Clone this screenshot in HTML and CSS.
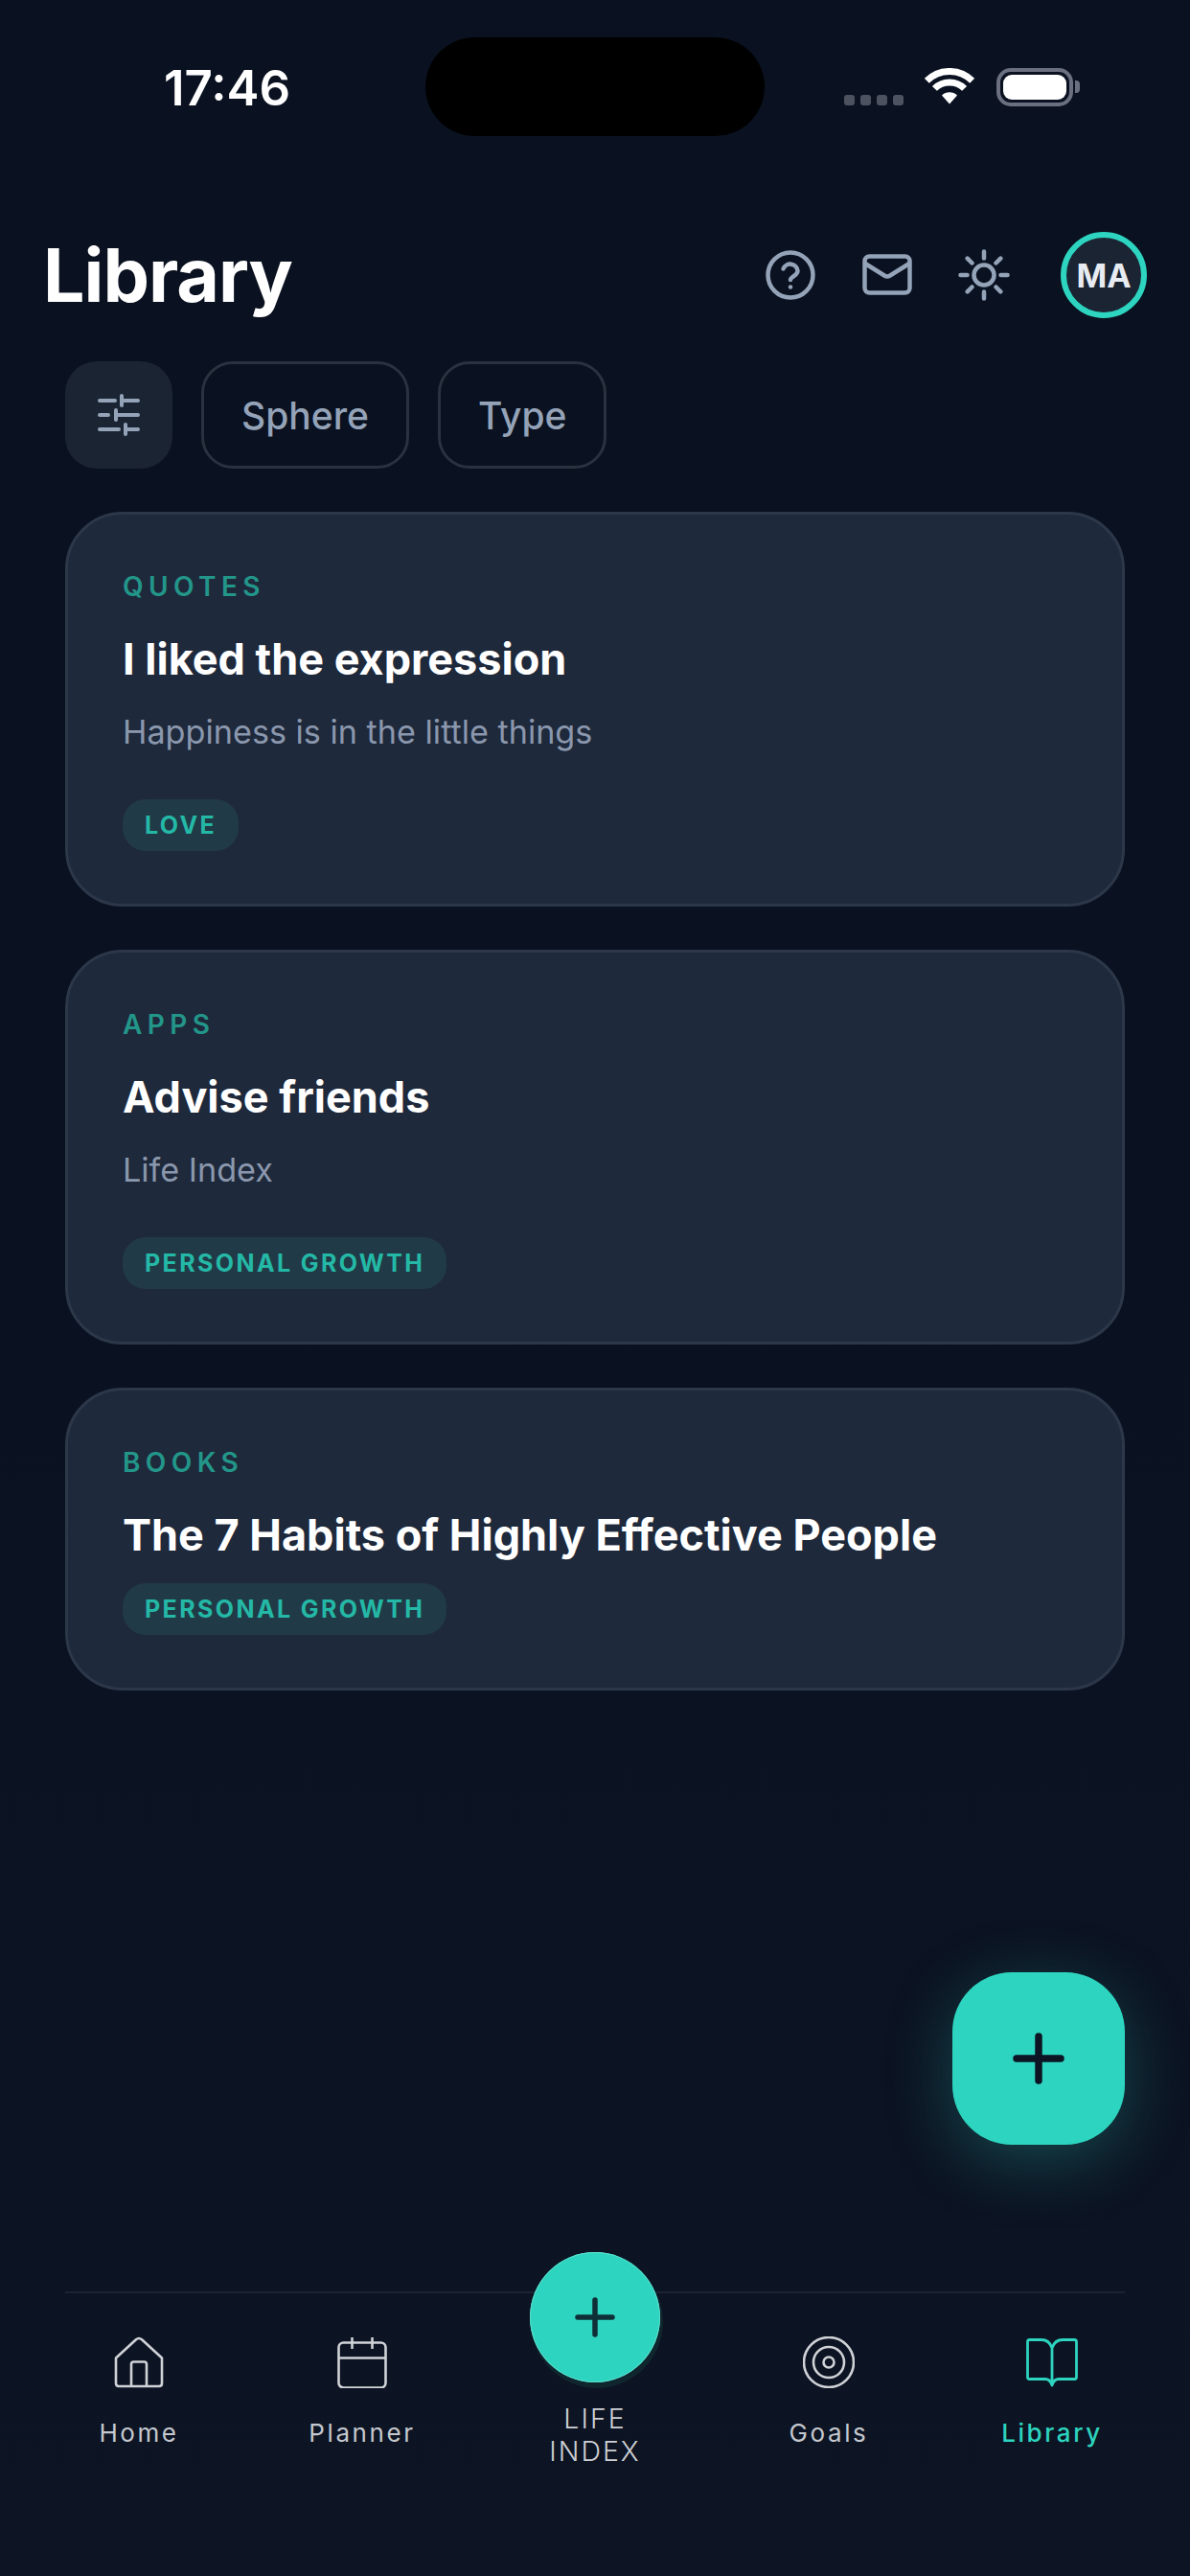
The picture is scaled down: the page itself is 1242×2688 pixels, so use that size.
FILE: index.html
```html
<!DOCTYPE html>
<html lang="en">
<head>
<meta charset="utf-8">
<title>Library</title>
<link rel="stylesheet" href="styles.css">
</head>
<body>
<div class="page">
  <div class="island"></div>
  <div class="status">
    <span class="time">17:46</span>
    <div class="status-icons">
      <div class="dots"><i></i><i></i><i></i><i></i></div>
      <svg class="wifi" width="54" height="38" viewBox="0 0 54 38"><g fill="none" stroke="#fff" stroke-width="7"><path d="M3.3 13.3a33.5 33.5 0 0 1 47.4 0"/><path d="M11.4 21.4a22 22 0 0 1 31.2 0"/></g><path d="M19 28.5a11.5 11.5 0 0 1 16 0L27 37.5z" fill="#fff"/></svg>
      <div class="battery"><div class="battery-fill"></div></div>
      <div class="battery-nub"></div>
    </div>
  </div>
  <header class="header">
    <h1 class="title">Library</h1>
    <div class="actions">
      <svg class="act" width="54" height="54" viewBox="0 0 54 54" fill="none" stroke="#94a3b8" stroke-width="4.5" stroke-linecap="round" stroke-linejoin="round"><circle cx="27" cy="27" r="23.5"/><path d="M19.5 20.5a7.8 7.8 0 0 1 15 2.2c0 5-7.5 6-7.5 9.3"/><path d="M27 39.5h.02"/></svg>
      <svg class="act" width="54" height="54" viewBox="0 0 54 54" fill="none" stroke="#94a3b8" stroke-width="4.5" stroke-linecap="round" stroke-linejoin="round"><rect x="3.5" y="7.5" width="47" height="38" rx="5"/><path d="M4 15l20 12.5q3 1.8 6 0L50 15"/></svg>
      <svg class="act" width="54" height="54" viewBox="0 0 54 54" fill="none" stroke="#94a3b8" stroke-width="4.5" stroke-linecap="round" stroke-linejoin="round"><circle cx="27" cy="27" r="10.5"/><path d="M27 2.500v7M27 44.500v7M2.500 27h7M44.500 27h7M9.700 9.700l4.800 4.800M39.500 39.500l4.800 4.800M9.700 44.300l4.800-4.800M39.500 14.500l4.800-4.800"/></svg>
      <div class="avatar">MA</div>
    </div>
  </header>
  <div class="filters">
    <button class="filter-icon">
      <svg width="44" height="44" viewBox="0 0 44 44" fill="none" stroke="#94a3b8" stroke-width="4" stroke-linecap="round"><path d="M2 7h16M26 7h16M25 2v10M2 22h9M20 22h22M19 17v10M2 37h20M30 37h12M29 32v10"/></svg>
    </button>
    <button class="chip">Sphere</button>
    <button class="chip">Type</button>
  </div>
  <main class="cards">
    <article class="card">
      <div class="cat">QUOTES</div>
      <h2 class="card-title">I liked the expression</h2>
      <p class="desc">Happiness is in the little things</p>
      <span class="tag">LOVE</span>
    </article>
    <article class="card">
      <div class="cat">APPS</div>
      <h2 class="card-title">Advise friends</h2>
      <p class="desc">Life Index</p>
      <span class="tag">PERSONAL GROWTH</span>
    </article>
    <article class="card">
      <div class="cat">BOOKS</div>
      <h2 class="card-title">The 7 Habits of Highly Effective People</h2>
      <span class="tag">PERSONAL GROWTH</span>
    </article>
  </main>
  <button class="fab">
    <svg width="54" height="54" viewBox="0 0 54 54" stroke="#0d1423" stroke-width="7.500" stroke-linecap="round"><path d="M27 4v46M4 27h46"/></svg>
  </button>
  <nav class="tabbar">
    <a class="tab">
      <svg width="54" height="54" viewBox="0 0 54 54" fill="none" stroke="#cfd2d6" stroke-width="2.600" stroke-linejoin="round"><path d="M3 22.500L24 3.200q3-2.400 6 0L51 22.500V49q0 3-3 3H6q-3 0-3-3z"/><path d="M19 52V29q0-2.500 2.500-2.500h11Q35 26.500 35 29V52"/></svg>
      <span>Home</span>
    </a>
    <a class="tab">
      <svg width="54" height="54" viewBox="0 0 54 54" fill="none" stroke="#cfd2d6" stroke-width="2.600"><rect x="2.500" y="6.500" width="49" height="47" rx="5"/><path d="M2.500 22.500h49M16.500 1v12M37.500 1v12"/></svg>
      <span>Planner</span>
    </a>
    <a class="tab tab-center">
      <div class="center-btn">
        <svg width="42" height="42" viewBox="0 0 42 42" stroke="#0f2f38" stroke-width="5.500" stroke-linecap="round"><path d="M21 3v36M3 21h36"/></svg>
      </div>
      <span>LIFE INDEX</span>
    </a>
    <a class="tab">
      <svg width="54" height="54" viewBox="0 0 54 54" fill="none" stroke="#cfd2d6" stroke-width="2.600"><circle cx="27" cy="27" r="26"/><circle cx="27" cy="27" r="16"/><circle cx="27" cy="27" r="5.500"/></svg>
      <span>Goals</span>
    </a>
    <a class="tab tab-active">
      <svg width="54" height="54" viewBox="0 0 54 54" fill="none" stroke="#2dd4bf" stroke-width="2.800" stroke-linejoin="round"><path d="M27 12.500V51M27 12Q24 3.500 16 3.500H3.500q-2 0-2 2v37q0 2 2 2H20q5 0 7 6.500q2-6.500 7-6.500h16.500q2 0 2-2v-37q0-2-2-2H38Q30 3.500 27 12z"/></svg>
      <span>Library</span>
    </a>
  </nav>
</div>
</body>
</html>
```

FILE: styles.css
```css
* { box-sizing: border-box; }
html, body { margin: 0; padding: 0; }
body { background: #0a1120; font-family: Inter, "Liberation Sans", sans-serif; }
.page {
  position: relative;
  width: 1242px;
  height: 2688px;
  overflow: hidden;
  display: flex;
  flex-direction: column;
  background: linear-gradient(180deg, #0a1120 0%, #0a1120 50%, #0d1423 100%);
}
.island {
  position: absolute;
  left: 444px;
  top: 39px;
  width: 354px;
  height: 103px;
  border-radius: 52px;
  background: #000;
}
.status {
  height: 242px;
  padding: 62px 115px 0 171px;
  display: flex;
  justify-content: space-between;
  align-items: flex-start;
  flex: none;
}
.time { font-size: 51px; font-weight: 600; line-height: 60px; color: #fff; }
.status-icons { display: flex; align-items: flex-end; margin-top: 9px; height: 40px; }
.dots { display: flex; gap: 6px; margin-right: 21px; margin-bottom: 1px; }
.dots i { width: 11px; height: 11px; border-radius: 3px; background: #4c5260; }
.wifi { margin-right: 22px; margin-bottom: 2px; }
.battery {
  width: 80px;
  height: 40px;
  border: 4px solid #6b7080;
  border-radius: 15px;
  padding: 3px;
}
.battery-fill { width: 100%; height: 100%; background: #fff; border-radius: 9px; }
.battery-nub { width: 5px; height: 13px; margin: 0 0 14px 2px; border-radius: 0 4px 4px 0; background: #6b7080; }
.header {
  height: 90px;
  flex: none;
  padding: 0 45px 0 45px;
  display: flex;
  align-items: center;
  justify-content: space-between;
}
.title { margin: 0; font-size: 77px; font-weight: 700; letter-spacing: -1px; color: #fff; line-height: 90px; }
.actions { display: flex; align-items: center; }
.act { margin-right: 47px; }
.act:nth-child(3) { margin-right: 53px; }
.avatar {
  width: 90px;
  height: 90px;
  border-radius: 50%;
  border: 6px solid #2dd4bf;
  background: #1a2433;
  color: #e8ecf2;
  font-size: 34px;
  font-weight: 700;
  display: flex;
  align-items: center;
  justify-content: center;
}
.filters { display: flex; gap: 30px; padding: 0 68px; margin-top: 45px; flex: none; }
.filter-icon {
  width: 112px;
  height: 112px;
  border: 0;
  border-radius: 33px;
  background: #1a2433;
  display: flex;
  align-items: center;
  justify-content: center;
  padding: 0;
}
.chip {
  height: 112px;
  padding: 0 39px;
  border: 3px solid #2a3240;
  border-radius: 33px;
  background: transparent;
  color: #94a3b8;
  font-family: inherit;
  font-size: 39px;
  font-weight: 500;
}
.cards { display: flex; flex-direction: column; gap: 45px; padding: 0 68px; margin-top: 45px; flex: none; }
.card {
  border: 3px solid #2c3849;
  border-radius: 60px;
  background: #1e293b;
  padding: 57px 57px 55px;
}
.cat { font-size: 28px; line-height: 36px; font-weight: 600; letter-spacing: 5.400px; color: #23968a; margin-bottom: 28px; }
.card-title { margin: 0 0 20px; font-size: 45px; line-height: 60px; font-weight: 650; color: #fff; }
.desc { margin: 22px 0 46px; font-size: 34.200px; line-height: 48px; color: #8a97ad; }
.tag {
  display: block;
  width: fit-content;
  height: 54px;
  padding: 0 23px;
  border-radius: 24px;
  background: #213a47;
  color: #24b8a6;
  font-size: 25px;
  line-height: 54px;
  font-weight: 700;
  letter-spacing: 2.400px;
}
.fab {
  position: absolute;
  left: 994px;
  top: 2058px;
  width: 180px;
  height: 180px;
  border: 0;
  padding: 0;
  border-radius: 62px;
  background: #2dd4bf;
  box-shadow: 0 16px 70px rgba(45, 212, 191, 0.28);
  display: flex;
  align-items: center;
  justify-content: center;
}
.tabbar {
  margin: auto 68px 0;
  height: 297px;
  flex: none;
  border-top: 2px solid #1c2433;
  display: grid;
  grid-template-columns: 154px 312px 174px 314px 152px;
  align-items: start;
}
.tab {
  display: flex;
  flex-direction: column;
  align-items: center;
  padding-top: 45px;
  color: #c4c8ce;
  font-size: 26px;
  letter-spacing: 2.600px;
  line-height: 32px;
}
.tab span { margin-top: 31px; white-space: nowrap; }
.tab-active { color: #2dd4bf; font-weight: 500; }
.tab-center { padding-top: 0; margin-top: -43px; text-align: center; font-weight: 300; }
.tab-center span { width: 140px; white-space: normal; margin-top: 21px; font-size: 28.500px; line-height: 34px; letter-spacing: 2px; color: #cdd0d5; }
.center-btn {
  width: 136px;
  height: 136px;
  border-radius: 50%;
  background: #2dd4bf;
  box-shadow: 0 0 0 1px #5ee0cf inset, 2px 5px 0 1px #10262e;
  display: flex;
  align-items: center;
  justify-content: center;
}
```
